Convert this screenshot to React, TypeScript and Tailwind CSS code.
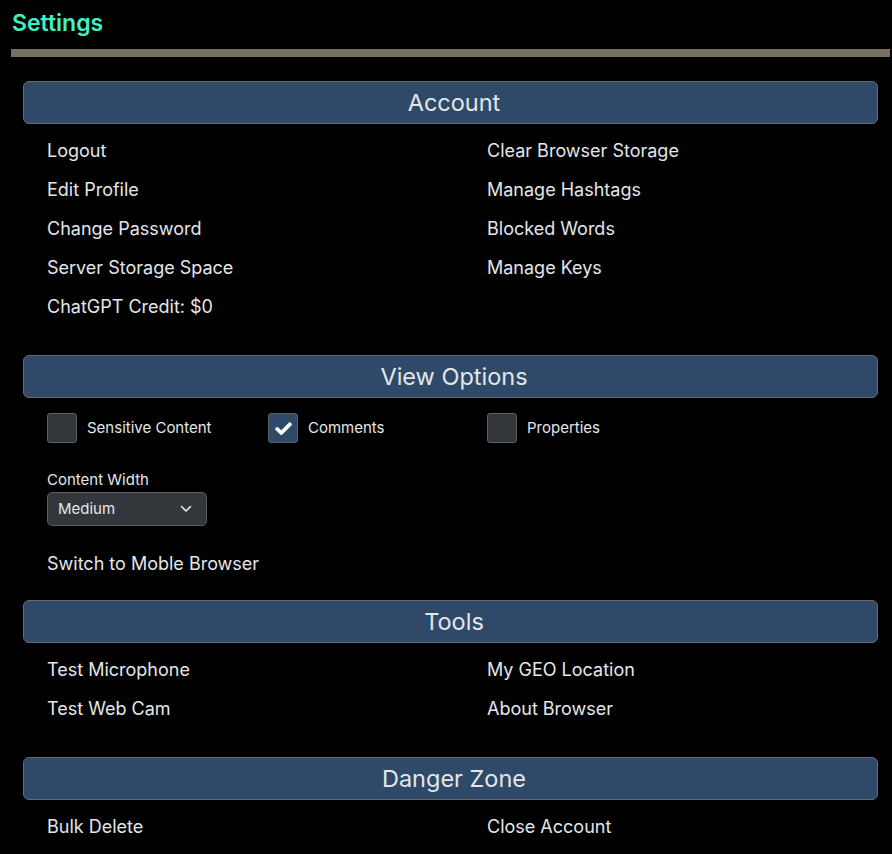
import React from "react";

const font = { fontFamily: "Inter, 'Noto Sans', sans-serif" };

function Header({ title }: { title: string }) {
  return (
    <div className="ml-[23px] mr-[14px] h-[43px] pl-[7px] flex items-center justify-center rounded-[6px] border border-[#6b6b6b] bg-[#2e4a68] text-[23.5px] text-[#e4e6ea]">
      {title}
    </div>
  );
}

function Item({ label }: { label: string }) {
  return <div className="h-[39px] flex items-center text-[18px] text-[#e4e6ea]">{label}</div>;
}

function TwoCol({ left, right }: { left: string[]; right: string[] }) {
  const rows = Math.max(left.length, right.length);
  const out: React.ReactNode[] = [];
  for (let i = 0; i < rows; i++) {
    out.push(<div key={"l" + i}>{left[i] ? <Item label={left[i]} /> : <div className="h-[39px]" />}</div>);
    out.push(<div key={"r" + i}>{right[i] ? <Item label={right[i]} /> : <div className="h-[39px]" />}</div>);
  }
  return <div className="mt-[7px] pl-[47px] grid grid-cols-[440px_1fr]">{out}</div>;
}

function Check({ label, checked }: { label: string; checked?: boolean }) {
  return (
    <div className="flex items-center gap-[10px]">
      <div
        className={
          "w-[30px] h-[30px] rounded-[3px] border border-[#5a5f66] flex items-center justify-center " +
          (checked ? "bg-[#2e4a68]" : "bg-[#33373b]")
        }
      >
        {checked && (
          <svg width="17" height="13" viewBox="0 0 17 13">
            <path d="M2.2 7 L6.3 11 L14.8 2.3" fill="none" stroke="#fff" strokeWidth="3.8" strokeLinecap="round" strokeLinejoin="round" />
          </svg>
        )}
      </div>
      <span className="text-[15px] text-[#e4e6ea]">{label}</span>
    </div>
  );
}

export default function App() {
  return (
    <div className="min-h-[854px] bg-black" style={font}>
      <div className="pt-[8px] pl-[12px] h-[49px]">
        <div className="text-[23px] font-semibold text-[#3ff2c3] leading-[30px]">Settings</div>
      </div>
      <div className="ml-[11px] mr-[2px] h-[8px] bg-[#777063]" />
      <div className="h-[24px]" />
      <Header title="Account" />
      <TwoCol
        left={["Logout", "Edit Profile", "Change Password", "Server Storage Space", "ChatGPT Credit: $0"]}
        right={["Clear Browser Storage", "Manage Hashtags", "Blocked Words", "Manage Keys"]}
      />
      <div className="h-[29px]" />
      <Header title="View Options" />
      <div className="mt-[15px] pl-[47px] grid grid-cols-[221px_219px_1fr]">
        <Check label="Sensitive Content" />
        <Check label="Comments" checked />
        <Check label="Properties" />
      </div>
      <div className="mt-[28px] pl-[47px]">
        <div className="text-[15px] text-[#e4e6ea] leading-[18px]">Content Width</div>
        <div className="mt-[3px] w-[160px] h-[34px] rounded-[5px] border border-[#5a5f66] bg-[#33373b] flex items-center justify-between pl-[10px] pr-[14px]">
          <span className="text-[15px] text-[#e4e6ea]">Medium</span>
          <svg width="12" height="8" viewBox="0 0 12 8">
            <path d="M1.5 1.5 L6 6 L10.5 1.5" fill="none" stroke="#e4e6ea" strokeWidth="1.6" strokeLinecap="round" strokeLinejoin="round" />
          </svg>
        </div>
      </div>
      <div className="mt-[18px] pl-[47px]">
        <Item label="Switch to Moble Browser" />
      </div>
      <div className="h-[17px]" />
      <Header title="Tools" />
      <TwoCol left={["Test Microphone", "Test Web Cam"]} right={["My GEO Location", "About Browser"]} />
      <div className="h-[29px]" />
      <Header title="Danger Zone" />
      <TwoCol left={["Bulk Delete"]} right={["Close Account"]} />
    </div>
  );
}
